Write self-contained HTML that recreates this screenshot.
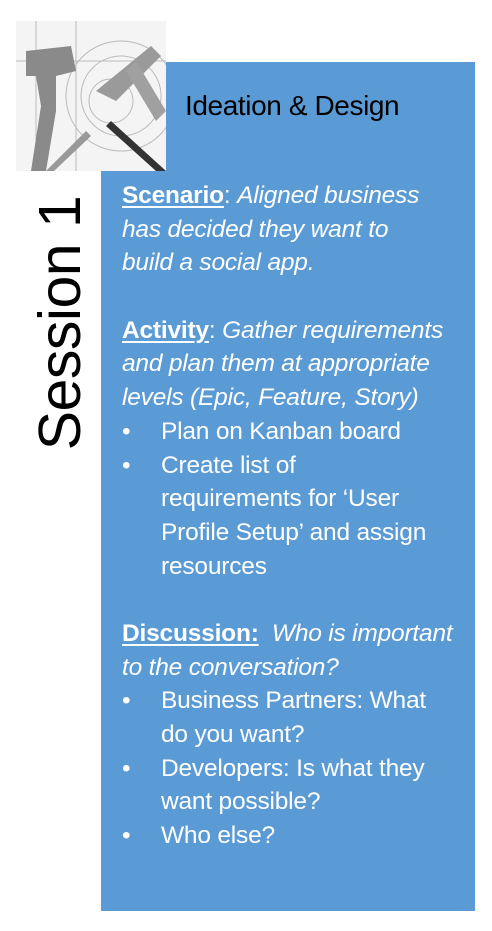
<!DOCTYPE html>
<html><head><style>
body{margin:0;width:492px;height:931px;background:#fff;position:relative;overflow:hidden;font-family:"Liberation Sans",sans-serif}
.b1{position:absolute;left:166px;top:62px;width:309px;height:110px;background:#5B9BD5}
.b2{position:absolute;left:101px;top:171px;width:374px;height:740px;background:#5B9BD5}
.title{position:absolute;left:185px;top:90px;font-size:28px;color:#000;white-space:nowrap;letter-spacing:-0.4px}
.sess{position:absolute;left:60px;top:323px;transform:translate(-50%,-50%) rotate(-90deg);font-size:59px;white-space:nowrap;color:#000;letter-spacing:-0.5px}
.txt{position:absolute;left:122px;top:179px;color:#fff;font-size:24.5px;line-height:33.7px;white-space:nowrap;letter-spacing:-0.2px}
.l{height:33.7px}
u{text-decoration-thickness:2px;text-underline-offset:3px}
.bl{position:relative;padding-left:39px}
.bl:before{content:"•";position:absolute;left:0}
</style></head><body>
<svg style="position:absolute;left:16px;top:21px" width="150" height="150" viewBox="0 0 150 150">
<rect width="150" height="150" fill="#f4f4f4"/>
<g stroke="#bbb" fill="none" stroke-width="1">
<circle cx="105" cy="75" r="55"/><circle cx="105" cy="75" r="40"/><circle cx="95" cy="80" r="22"/>
<line x1="0" y1="40" x2="150" y2="40"/><line x1="20" y1="0" x2="20" y2="150"/><line x1="60" y1="0" x2="60" y2="150"/>
</g>
<path d="M10 30 L55 25 L60 50 L40 55 L40 90 L30 150 L15 150 L25 85 L20 55 L10 55Z" fill="#8a8a8a"/>
<path d="M80 70 L135 25 L145 35 L100 80Z" fill="#9a9a9a"/>
<path d="M120 40 L150 90 L140 100 L110 50Z" fill="#a0a0a0"/>
<path d="M95 100 L150 150 L140 150 L90 105Z" fill="#333"/>
<path d="M70 110 L30 150 L38 150 L75 115Z" fill="#999"/>
</svg>
<div class="b1"></div><div class="b2"></div>
<div class="title">Ideation &amp; Design</div>
<div class="sess">Session 1</div>
<div class="txt">
<div class="l"><b><u>Scenario</u></b>: <i>Aligned business</i></div>
<div class="l"><i>has decided they want to</i></div>
<div class="l"><i>build a social app.</i></div>
<div class="l"></div>
<div class="l"><b><u>Activity</u></b>: <i>Gather requirements</i></div>
<div class="l"><i>and plan them at appropriate</i></div>
<div class="l"><i>levels (Epic, Feature, Story)</i></div>
<div class="l bl">Plan on Kanban board</div>
<div class="l bl">Create list of</div>
<div class="l" style="padding-left:39px">requirements for ‘User</div>
<div class="l" style="padding-left:39px">Profile Setup’ and assign</div>
<div class="l" style="padding-left:39px">resources</div>
<div class="l"></div>
<div class="l"><b><u>Discussion:</u></b>&nbsp; <i>Who is important</i></div>
<div class="l"><i>to the conversation?</i></div>
<div class="l bl">Business Partners: What</div>
<div class="l" style="padding-left:39px">do you want?</div>
<div class="l bl">Developers: Is what they</div>
<div class="l" style="padding-left:39px">want possible?</div>
<div class="l bl">Who else?</div>
</div>
</body></html>
